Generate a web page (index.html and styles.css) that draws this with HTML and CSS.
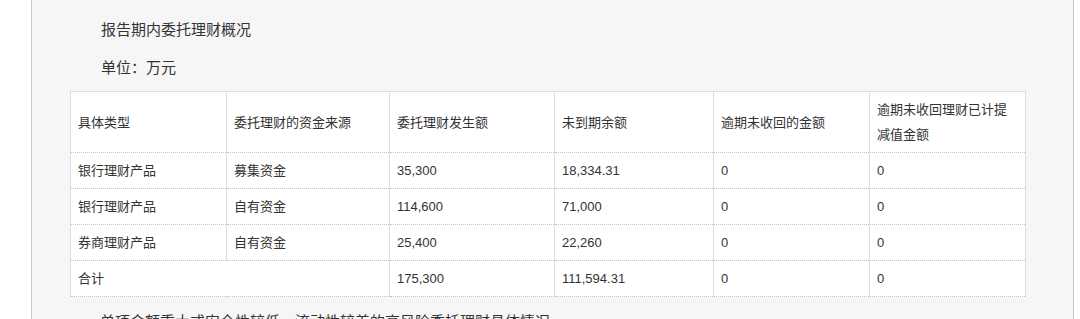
FILE: index.html
```html
<!DOCTYPE html>
<html lang="zh-CN">
<head>
<meta charset="utf-8">
<title>报告期内委托理财概况</title>
<link rel="stylesheet" href="styles.css">
</head>
<body>
<div class="page">
  <div class="panel">
    <p class="para title">报告期内委托理财概况</p>
    <p class="para unit">单位：万元</p>
    <table class="grid">
      <colgroup>
        <col class="c1"><col class="c2"><col class="c3"><col class="c4"><col class="c5"><col class="c6">
      </colgroup>
      <thead>
        <tr>
          <th>具体类型</th>
          <th>委托理财的资金来源</th>
          <th>委托理财发生额</th>
          <th>未到期余额</th>
          <th>逾期未收回的金额</th>
          <th>逾期未收回理财已计提减值金额</th>
        </tr>
      </thead>
      <tbody>
        <tr><td>银行理财产品</td><td>募集资金</td><td>35,300</td><td>18,334.31</td><td>0</td><td>0</td></tr>
        <tr><td>银行理财产品</td><td>自有资金</td><td>114,600</td><td>71,000</td><td>0</td><td>0</td></tr>
        <tr><td>券商理财产品</td><td>自有资金</td><td>25,400</td><td>22,260</td><td>0</td><td>0</td></tr>
        <tr><td colspan="2">合计</td><td>175,300</td><td>111,594.31</td><td>0</td><td>0</td></tr>
      </tbody>
    </table>
    <p class="para after">单项金额重大或安全性较低、流动性较差的高风险委托理财具体情况</p>
  </div>
</div>
</body>
</html>
```

FILE: styles.css
```css
html, body {
  margin: 0;
  padding: 0;
  background: #ffffff;
}

body {
  font-family: "Liberation Sans", "Noto Sans CJK SC", sans-serif;
  color: #333333;
}

.page {
  padding: 0 6px 0 31px;
  height: 319px;
  overflow: hidden;
}

.panel {
  background: #f6f6f6;
  border-left: 1px solid #c8ccd6;
  border-right: 1px solid #c8ccd6;
  padding: 0 48px 0 38px;
  min-height: 400px;
}

.para {
  margin: 0;
  font-size: 15px;
  line-height: 24px;
  padding-left: 31px;
}

.title {
  padding-top: 18px;
}

.unit {
  margin-top: 14px;
}

.after {
  margin-top: 13px;
  padding-left: 30px;
}

.grid {
  margin-top: 11px;
  width: 955px;
  table-layout: fixed;
  border-collapse: collapse;
  background: #ffffff;
  font-size: 13px;
  line-height: 25px;
}

.c1 { width: 156px; }
.c2 { width: 163px; }
.c3 { width: 165px; }
.c4 { width: 159px; }
.c5 { width: 156px; }
.c6 { width: 156px; }

.grid th,
.grid td {
  text-align: left;
  font-weight: normal;
  vertical-align: middle;
  padding: 5px 12px 5px 7px;
  border-left: 1px solid #dddddd;
  border-right: 1px solid #dddddd;
  border-bottom: 1px dotted #c4c4c4;
}

.grid th {
  height: 49px;
  border-top: 1px solid #dddddd;
}

.grid td {
  height: 25px;
}
```
